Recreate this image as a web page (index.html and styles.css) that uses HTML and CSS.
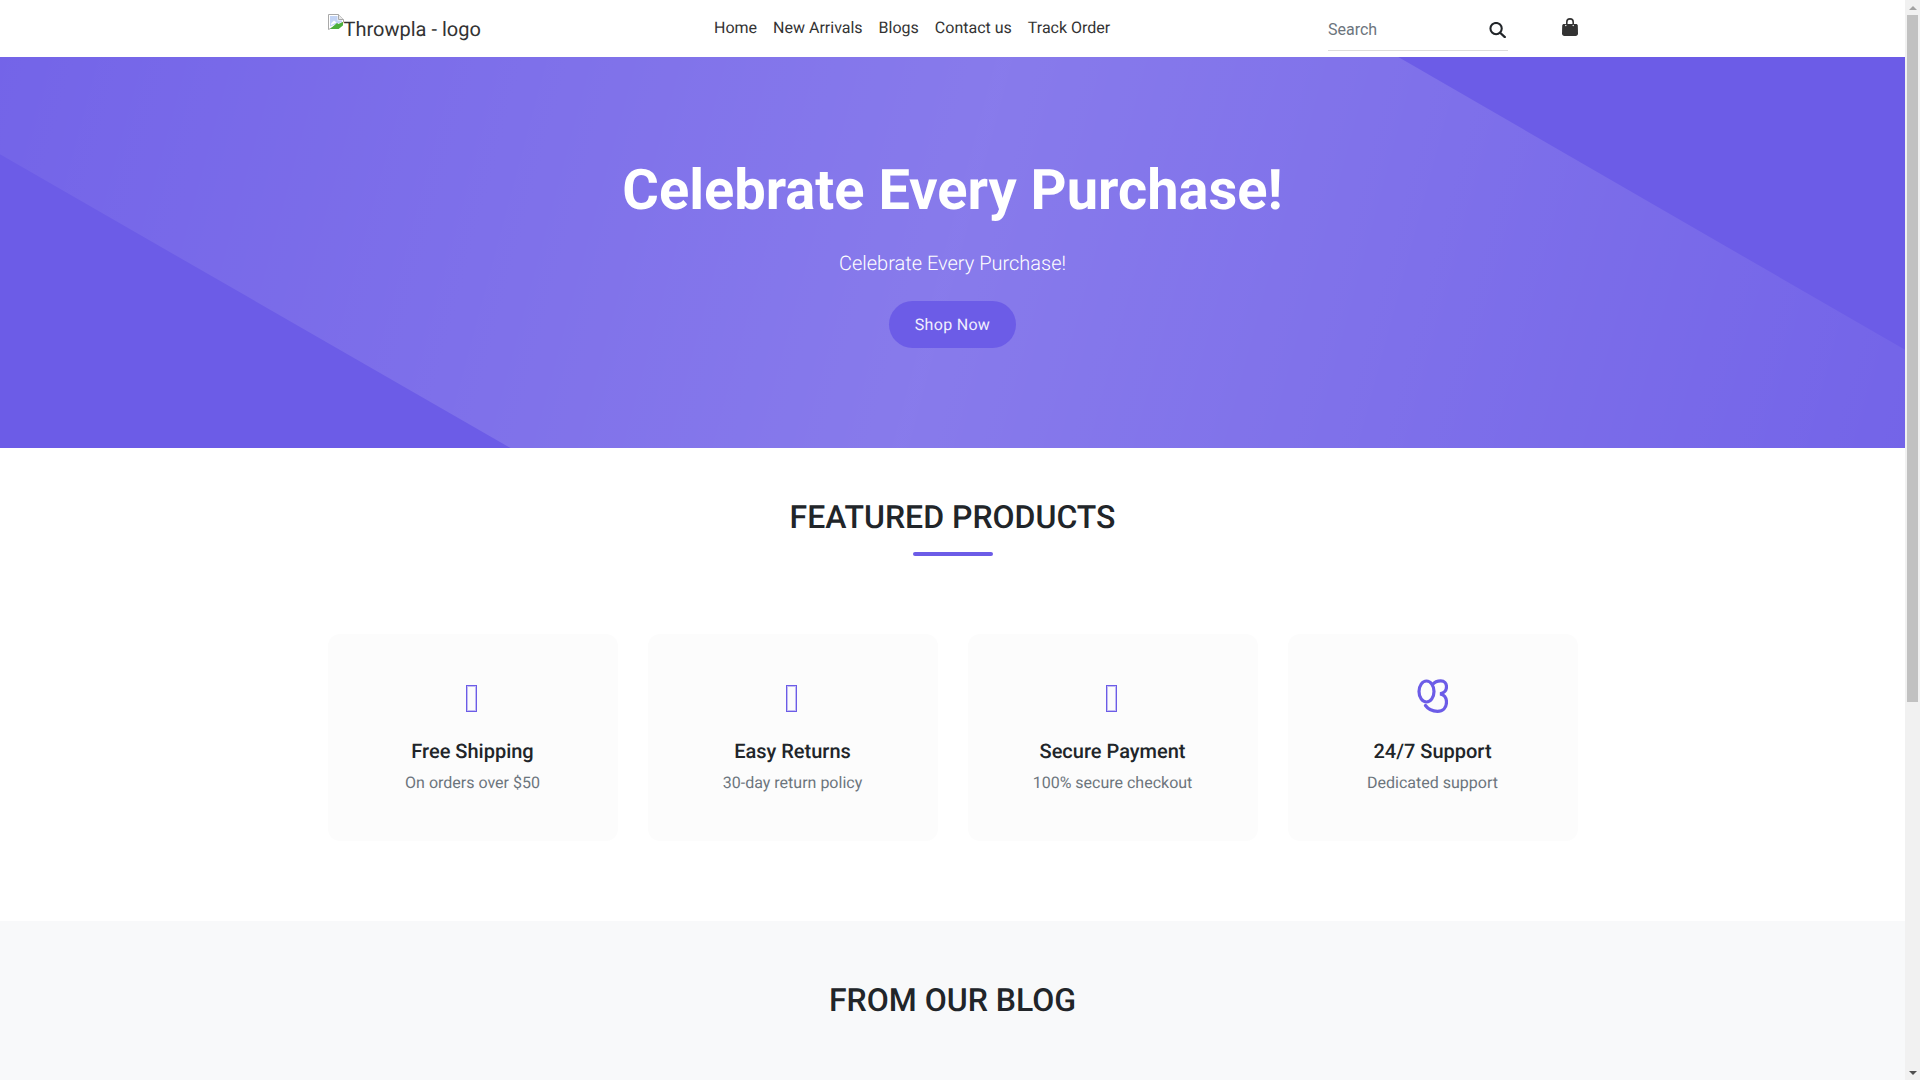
FILE: index.html
```html
<!DOCTYPE html>
<html lang="en">
<head>
<meta charset="utf-8">
<title>Throwpla</title>
<link rel="stylesheet" href="styles.css">
</head>
<body>
<header class="site-header">
  <div class="container nav-row">
    <a class="logo" href="#">
      <svg class="broken" width="16" height="16" viewBox="0 0 16 16" aria-hidden="true">
        <path d="M.5.5H10.5L15.5 5.5V8L.5 15.5Z" fill="#fff" stroke="#a9a9a9"/>
        <path d="M10.5.5V5.5H15.5" fill="#e8e8e8" stroke="#a9a9a9"/>
        <path d="M2 2H9.5V6.5H14V8L2 12.5Z" fill="#c3d4f5"/>
        <path d="M3 9.5L6 6.5L8.5 8.5L3 11Z" fill="#fff"/>
        <path d="M3 16L10 9.5L16 10V16Z" fill="#fff"/>
        <path d="M2 15L9 9L10.5 10L15 8V15Z" fill="#4caf3c"/>
        <path d="M10 15.5L15.5 11V15.5Z" fill="#fff"/>
      </svg><span>Throwpla - logo</span>
    </a>
    <nav class="main-nav">
      <a href="#">Home</a>
      <a href="#">New Arrivals</a>
      <a href="#">Blogs</a>
      <a href="#">Contact us</a>
      <a href="#">Track Order</a>
    </nav>
    <form class="search">
      <input class="search-input" type="text" placeholder="Search">
      <svg class="search-icon" width="17" height="16" viewBox="0 0 18 17" aria-hidden="true"><circle cx="7.500" cy="7" r="6" fill="none" stroke="#212529" stroke-width="2.200"/><path d="M11.800 11.400L16.800 16" fill="none" stroke="#212529" stroke-width="2.400" stroke-linecap="round"/></svg>
    </form>
    <a class="bag" href="#" aria-label="Cart">
      <svg width="16" height="18" viewBox="0 0 16 18" aria-hidden="true">
        <path fill="#333" d="M2 6H14C15 6 15.700 6.700 15.800 7.700L16 15.500C16 16.900 15 18 13.600 18H2.400C1 18 0 16.900 0 15.500L.2 7.700C.3 6.700 1 6 2 6Z"/>
        <path fill="none" stroke="#333" stroke-width="1.600" d="M4.800 7V4C4.800 2.200 6.200.9 8 .9S11.200 2.200 11.200 4V7"/>
        <circle cx="3.800" cy="7.500" r=".7" fill="#fff"/><circle cx="11.200" cy="7.500" r=".7" fill="#fff"/>
      </svg>
    </a>
  </div>
</header>

<section class="hero">
  <h1 class="hero-title">Celebrate Every Purchase!</h1>
  <p class="hero-sub">Celebrate Every Purchase!</p>
  <a class="hero-btn" href="#">Shop Now</a>
</section>

<section class="featured">
  <div class="container">
    <h2 class="section-title">FEATURED PRODUCTS</h2>
    <div class="title-bar"></div>
    <div class="feature-grid">
      <div class="feature-card"><div class="feature-icon"><span class="missing-glyph"></span></div><h3>Free Shipping</h3><p>On orders over $50</p></div>
      <div class="feature-card"><div class="feature-icon"><span class="missing-glyph"></span></div><h3>Easy Returns</h3><p>30-day return policy</p></div>
      <div class="feature-card"><div class="feature-icon"><span class="missing-glyph"></span></div><h3>Secure Payment</h3><p>100% secure checkout</p></div>
      <div class="feature-card"><div class="feature-icon"><svg class="support-glyph" width="31" height="34" viewBox="0 0 31 34" aria-hidden="true"><g fill="none" stroke="#6c5ce7" stroke-width="3.200" stroke-linecap="round"><ellipse cx="9.500" cy="12.500" rx="7.500" ry="10.500"/><path d="M15.500 5.500C17.500 3 20.500 1.800 23.800 1.800C27.300 1.800 29.500 4.500 29.500 7.800C29.500 11.500 27 14.300 23 14.800C27 15.300 29.500 18.800 29.500 23C29.500 28.800 25.800 32.300 20.500 32.300C15.500 32.300 11 30 8.500 26.500"/></g></svg></div><h3>24/7 Support</h3><p>Dedicated support</p></div>
    </div>
  </div>
</section>

<section class="blog">
  <div class="container">
    <h2 class="section-title">FROM OUR BLOG</h2>
  </div>
</section>

<aside class="scrollbar" aria-hidden="true">
  <div class="scroll-btn"><span class="arrow-up"></span></div>
  <div class="scroll-track"><div class="scroll-thumb"></div></div>
  <div class="scroll-btn"><span class="arrow-down"></span></div>
</aside>
</body>
</html>
```
FILE: styles.css
```css
* { box-sizing: border-box; }
body {
  margin: 0;
  padding-right: 15px;
  font-family: Roboto, "Liberation Sans", sans-serif;
  font-size: 16px;
  line-height: 1.5;
  color: #212529;
  background: #fff;
  text-rendering: geometricPrecision;
}
a { text-decoration: none; color: inherit; }
.container { width: 1280px; margin: 0 auto; padding: 0 15px; }

.site-header { height: 57px; background: #fff; }
.nav-row { display: flex; align-items: flex-start; height: 57px; }
.logo { flex: none; display: flex; align-items: flex-start; width: 386.500px; height: 57px; padding-top: 14px; font-size: 20px; line-height: 31px; color: #333; }
.broken { flex: none; }
.main-nav { flex: none; display: flex; gap: 16px; width: 614px; padding-top: 16px; color: #333; }
.search { flex: none; position: relative; width: 180px; height: 51px; padding-top: 12px; border-bottom: 1px solid #dcdcdc; }
.search-input { width: 100%; height: 34px; padding: 0; border: 0; outline: 0; font: 16px Roboto, sans-serif; background: transparent; }
.search-input::placeholder { color: #6c757d; opacity: 1; }
.search-icon { position: absolute; right: 2px; top: 22px; }
.bag { margin-left: 53.500px; padding-top: 18px; line-height: 0; }

.hero {
  position: relative;
  display: flex;
  flex-direction: column;
  align-items: center;
  height: 391px;
  padding-top: 100px;
  background: #6c5ce7;
  color: #fff;
}
.hero::before {
  content: "";
  position: absolute;
  inset: 0;
  background: linear-gradient(105deg, rgba(255,255,255,.05) 0%, rgba(255,255,255,.19) 50%, rgba(255,255,255,.05) 100%);
  clip-path: polygon(0 0, 73.400% 0, 100% 74.900%, 100% 100%, 26.800% 100%, 0 24.900%);
}
.hero-title, .hero-sub, .hero-btn { position: relative; }
.hero-title { margin: 0 0 24px; font-size: 56px; line-height: 67px; font-weight: 700; }
.hero-sub { margin: 0 0 23px; font-size: 20px; line-height: 30px; font-weight: 300; }
.hero-btn { display: flex; align-items: center; justify-content: center; width: 127px; height: 47px; border-radius: 24px; background: #6c5ce7; color: #f1effe; letter-spacing: .3px; }

.featured { height: 473px; padding-top: 50px; background: #fff; }
.section-title { margin: 0; text-align: center; font-size: 32px; line-height: 38px; font-weight: 500; color: #212529; }
.title-bar { width: 80px; height: 4px; margin: 16px auto 0; border-radius: 2px; background: #6c5ce7; }
.feature-grid { display: grid; grid-template-columns: repeat(4, 1fr); gap: 30px; margin-top: 78px; }
.feature-card { height: 207px; padding-top: 40px; text-align: center; background: #fcfcfc; border-radius: 12px; }
.feature-icon { display: flex; align-items: center; justify-content: center; height: 48px; }
.missing-glyph { display: block; width: 11px; height: 27px; margin-right: 2px; border: 1px solid #6c5ce7; box-shadow: inset 0 0 0 1px rgba(108,92,231,.4); }
.support-glyph { margin-bottom: 4px; }
.feature-card h3 { margin: 17px 0 0; font-size: 20px; line-height: 24px; font-weight: 500; color: #212529; }
.feature-card p { margin: 8px 0 0; color: #6c757d; }

.blog { height: 729px; padding-top: 60px; background: #f8f9fa; }

.scrollbar { position: fixed; top: 0; right: 0; bottom: 0; display: flex; flex-direction: column; width: 15px; background: #f1f1f1; }
.scroll-btn { flex: none; display: flex; align-items: center; justify-content: center; height: 15px; }
.arrow-up { width: 0; height: 0; border: 4px solid transparent; border-top: 0; border-bottom-color: #a3a3a3; }
.arrow-down { width: 0; height: 0; border: 4px solid transparent; border-bottom: 0; border-top-color: #505050; }
.scroll-track { flex: 1; padding: 0 2px; }
.scroll-thumb { height: 687px; background: #c1c1c1; }
```
